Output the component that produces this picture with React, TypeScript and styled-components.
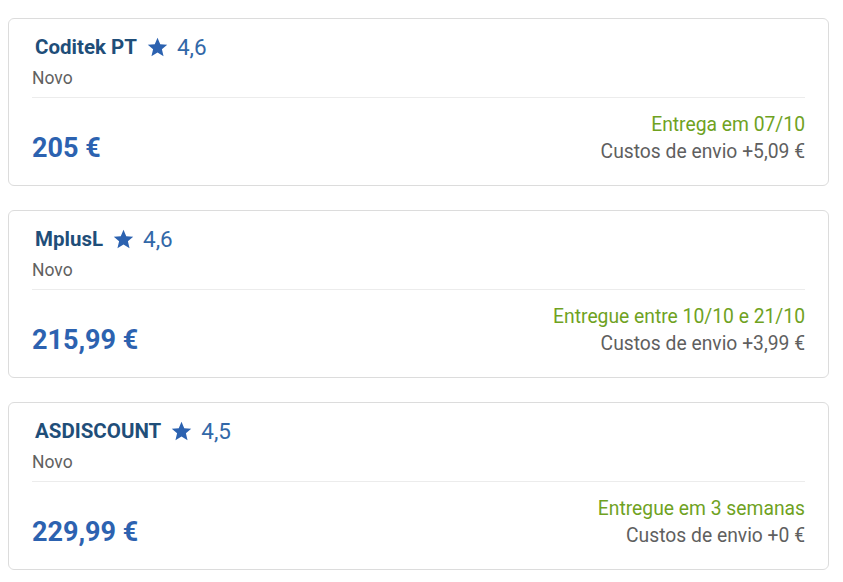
import React from "react";
import styled, { createGlobalStyle } from "styled-components";

const GlobalStyle = createGlobalStyle`
  body {
    margin: 0;
    background: #ffffff;
    font-family: Roboto, "Liberation Sans", Arial, sans-serif;
  }
`;

const ListEl = styled.div`
  display: flex;
  flex-direction: column;
  gap: 24px;
  padding: 18px 14px 0 8px;
`;

const CardEl = styled.div`
  border: 1px solid #dcdcdc;
  border-radius: 6px;
  background: #fff;
  height: 168px;
  box-sizing: border-box;
  padding: 13px 23px 0 23px;
`;

const HeadEl = styled.div`
  border-bottom: 1px solid #ececec;
  padding-bottom: 8px;
`;

const TitleRow = styled.div`
  display: flex;
  align-items: center;
  height: 30px;
  padding-left: 3px;
`;

const SellerName = styled.span`
  font-size: 20.5px;
  font-weight: 700;
  color: #1f4e79;
  margin-right: 9px;
`;

const Rating = styled.span`
  display: flex;
  align-items: center;
  gap: 8px;
  font-size: 22.5px;
  color: #3268a8;
`;

const Condition = styled.div`
  font-size: 17.5px;
  color: #616161;
  height: 22px;
  line-height: 22px;
  margin-top: 5px;
`;

const BottomRow = styled.div`
  display: flex;
  justify-content: space-between;
  align-items: flex-end;
  padding-top: 13px;
`;

const Price = styled.div`
  font-size: 27px;
  font-weight: 700;
  color: #2c62b0;
  line-height: 30px;
  margin-bottom: 2px;
`;

const Delivery = styled.div`
  text-align: right;
  font-size: 19.3px;
  line-height: 27px;
`;

const DeliveryDate = styled.div`
  color: #6fa21f;
`;

const Shipping = styled.div`
  color: #5f5f5f;
`;

const Star = () => (
  <svg width="23" height="22" viewBox="0 0 24 24">
    <path
      d="M12 1.8l3 7.1 7.6.6-5.8 5 1.8 7.5L12 18l-6.6 4 1.8-7.5-5.8-5 7.6-.6z"
      fill="#2c62b0"
    />
  </svg>
);

interface Offer {
  seller: string;
  rating: string;
  price: string;
  delivery: string;
  shipping: string;
}

const offers: Offer[] = [
  { seller: "Coditek PT", rating: "4,6", price: "205 €", delivery: "Entrega em 07/10", shipping: "Custos de envio +5,09 €" },
  { seller: "MplusL", rating: "4,6", price: "215,99 €", delivery: "Entregue entre 10/10 e 21/10", shipping: "Custos de envio +3,99 €" },
  { seller: "ASDISCOUNT", rating: "4,5", price: "229,99 €", delivery: "Entregue em 3 semanas", shipping: "Custos de envio +0 €" },
];

const App: React.FunctionComponent<{}> = () => {
  return (
    <>
      <GlobalStyle />
      <ListEl>
        {offers.map((o) => (
          <CardEl key={o.seller}>
            <HeadEl>
              <TitleRow>
                <SellerName>{o.seller}</SellerName>
                <Rating>
                  <Star />
                  {o.rating}
                </Rating>
              </TitleRow>
              <Condition>Novo</Condition>
            </HeadEl>
            <BottomRow>
              <Price>{o.price}</Price>
              <Delivery>
                <DeliveryDate>{o.delivery}</DeliveryDate>
                <Shipping>{o.shipping}</Shipping>
              </Delivery>
            </BottomRow>
          </CardEl>
        ))}
      </ListEl>
    </>
  );
};

export default App;
